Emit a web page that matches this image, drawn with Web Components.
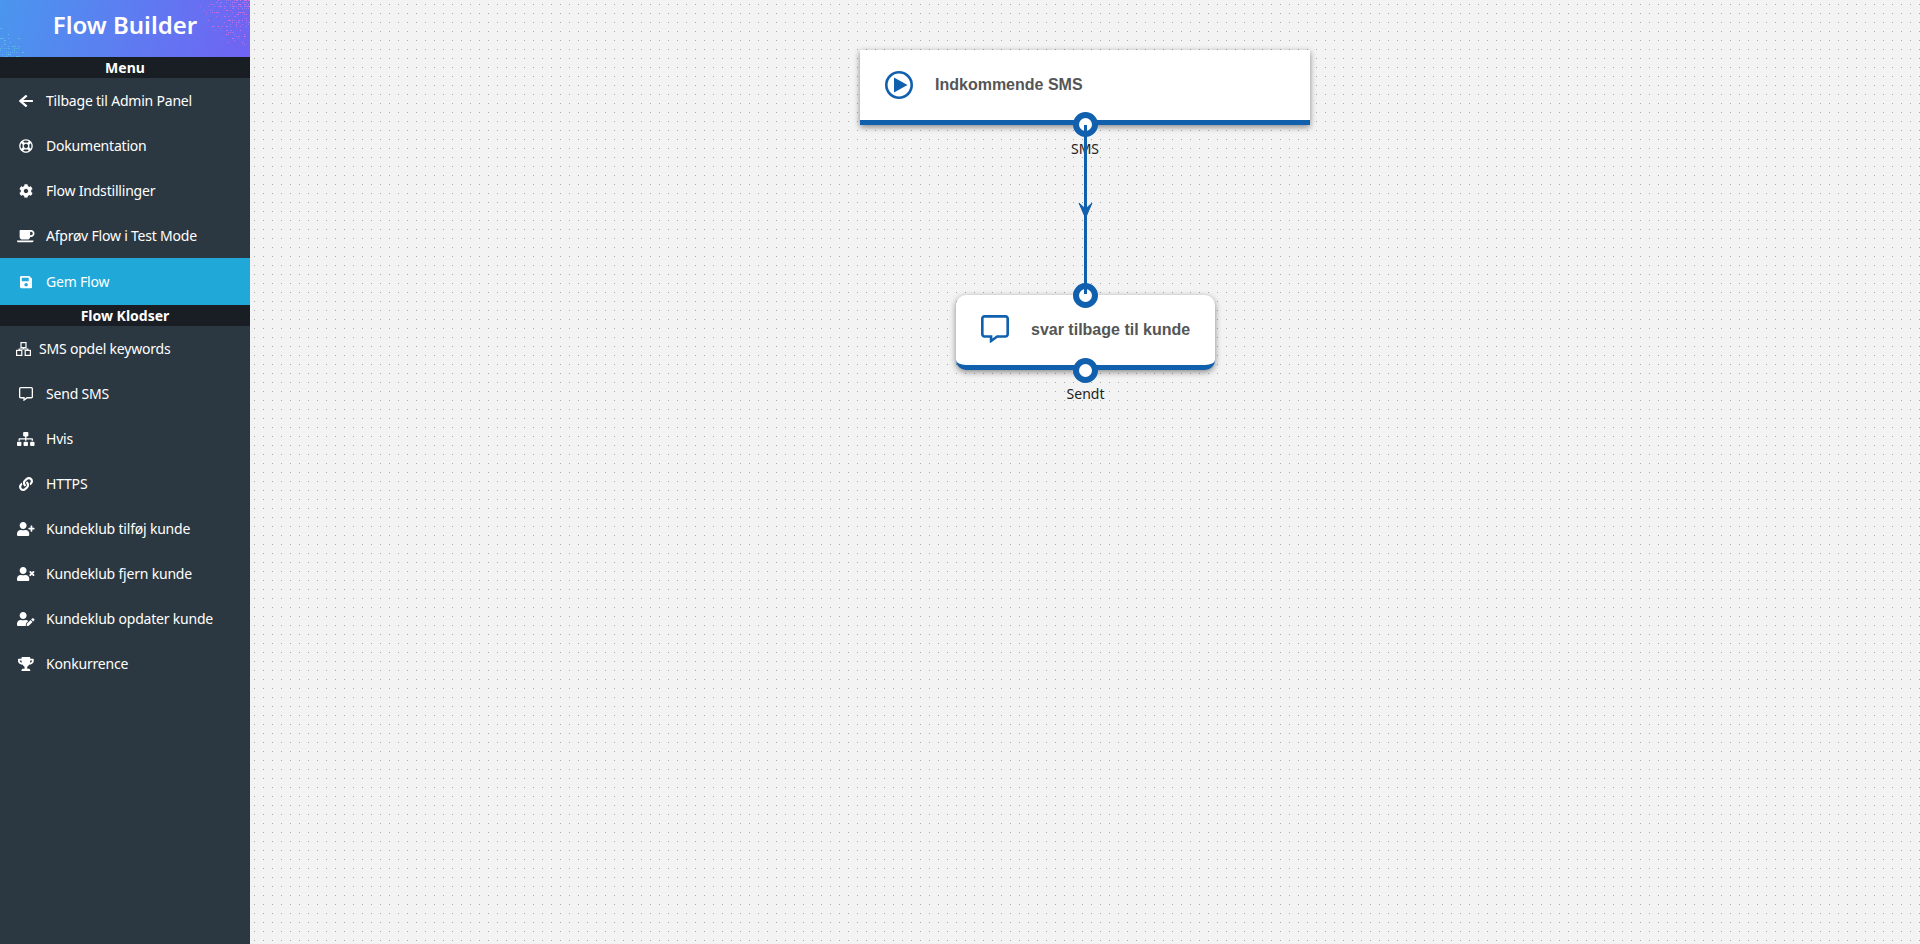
<!DOCTYPE html>
<html lang="da">
<head>
<meta charset="utf-8">
<title>Flow Builder</title>
<style>
    html, body { margin: 0; height: 100%; overflow: hidden; }
    body { font-family: "Noto Sans", "Open Sans", sans-serif; }
    flow-app { height: 100%; }
</style>
</head>
<body>
<flow-app>
    <flow-sidebar slot="sidebar">
        <side-head>Menu</side-head>
        <side-item icon="back">Tilbage til Admin Panel</side-item>
        <side-item icon="help">Dokumentation</side-item>
        <side-item icon="gear">Flow Indstillinger</side-item>
        <side-item icon="coffee">Afprøv Flow i Test Mode</side-item>
        <side-item icon="save" active>Gem Flow</side-item>
        <side-head>Flow Klodser</side-head>
        <side-item icon="boxes" tight>SMS opdel keywords</side-item>
        <side-item icon="chat">Send SMS</side-item>
        <side-item icon="tree">Hvis</side-item>
        <side-item icon="link">HTTPS</side-item>
        <side-item icon="useradd">Kundeklub tilføj kunde</side-item>
        <side-item icon="userdel">Kundeklub fjern kunde</side-item>
        <side-item icon="useredit">Kundeklub opdater kunde</side-item>
        <side-item icon="trophy">Konkurrence</side-item>
    </flow-sidebar>
    <flow-canvas slot="canvas">
        <flow-node kind="start" output="SMS" style="left:610px;top:50px;width:450px;height:75px">Indkommende SMS</flow-node>
        <flow-node kind="sms" input output="Sendt" style="left:706px;top:295px;width:259px;height:75px">svar tilbage til kunde</flow-node>
    </flow-canvas>
</flow-app>

<script>
const USER = 'M224 256c70.7 0 128-57.3 128-128S294.700 0 224 0 96 57.300 96 128s57.300 128 128 128zm89.600 32h-16.700c-22.200 10.200-46.900 16-72.900 16s-50.600-5.800-72.900-16h-16.700C60.200 288 0 348.200 0 422.400V464c0 26.500 21.500 48 48 48h352c26.500 0 48-21.500 48-48v-41.600c0-74.200-60.200-134.400-134.400-134.400z';
const CHAT = 'M448 0H64C28.700 0 0 28.700 0 64v288c0 35.300 28.700 64 64 64h96v84c0 7.100 5.800 12 12 12 2.400 0 4.900-.7 7.100-2.400L304 416h144c35.300 0 64-28.700 64-64V64c0-35.300-28.700-64-64-64zm16 352c0 8.800-7.200 16-16 16H288l-12.800 9.600L208 428v-60H64c-8.800 0-16-7.200-16-16V64c0-8.800 7.200-16 16-16h384c8.800 0 16 7.200 16 16v288z';

// [viewBox width, path] on a 512 high box
const ICONS = {
    back: [448, 'M257.500 445.100l-22.200 22.200c-9.400 9.400-24.600 9.400-33.900 0L7 273c-9.400-9.400-9.400-24.600 0-33.900L201.400 44.700c9.400-9.400 24.600-9.400 33.900 0l22.200 22.200c9.500 9.500 9.300 25-.4 34.300L136.600 216H424c13.300 0 24 10.700 24 24v32c0 13.300-10.700 24-24 24H136.600l120.500 114.800c9.800 9.300 10 24.800.4 34.300z'],
    help: [512, 'M256 504c136.967 0 248-111.033 248-248S392.967 8 256 8 8 119.033 8 256s111.033 248 248 248zm-103.398-76.720l53.411-53.411c31.806 13.506 68.128 13.522 99.974 0l53.411 53.411c-63.217 38.319-143.579 38.319-206.796 0zM336 256c0 44.112-35.888 80-80 80s-80-35.888-80-80 35.888-80 80-80 80 35.888 80 80zm91.280 103.398l-53.411-53.411c13.505-31.806 13.522-68.128 0-99.974l53.411-53.411c38.319 63.217 38.319 143.579 0 206.796zM359.397 84.720l-53.411 53.411c-31.806-13.505-68.128-13.522-99.973 0L152.602 84.720c63.217-38.319 143.579-38.319 206.795 0zM84.720 152.602l53.411 53.411c-13.506 31.806-13.522 68.128 0 99.974L84.720 359.398c-38.319-63.217-38.319-143.579 0-206.796z'],
    gear: [512, 'M487.400 315.700l-42.600-24.600c4.300-23.200 4.300-47 0-70.200l42.600-24.600c4.900-2.800 7.100-8.600 5.500-14-11.100-35.600-30-67.800-54.700-94.600-3.800-4.100-10-5.100-14.800-2.300L380.800 110c-17.900-15.400-38.500-27.300-60.800-35.100V25.800c0-5.600-3.900-10.500-9.400-11.700-36.700-8.200-74.300-7.800-109.200 0-5.500 1.200-9.400 6.100-9.400 11.700V75c-22.200 7.900-42.800 19.800-60.800 35.100L88.700 85.500c-4.900-2.800-11-1.900-14.800 2.300-24.700 26.700-43.600 58.900-54.700 94.600-1.700 5.400.6 11.200 5.500 14L67.300 221c-4.300 23.200-4.300 47 0 70.200l-42.600 24.600c-4.900 2.800-7.100 8.600-5.500 14 11.100 35.600 30 67.800 54.700 94.600 3.800 4.100 10 5.100 14.800 2.300l42.600-24.600c17.900 15.400 38.500 27.300 60.800 35.100v49.200c0 5.600 3.900 10.500 9.400 11.700 36.700 8.200 74.300 7.800 109.200 0 5.500-1.200 9.400-6.100 9.400-11.700v-49.200c22.200-7.900 42.800-19.800 60.800-35.100l42.600 24.600c4.900 2.800 11 1.900 14.800-2.300 24.700-26.700 43.600-58.900 54.700-94.600 1.500-5.500-.7-11.300-5.600-14.100zM256 336c-44.100 0-80-35.900-80-80s35.900-80 80-80 80 35.900 80 80-35.900 80-80 80z'],
    coffee: [640, 'M192 384h192c53 0 96-43 96-96h32c70.600 0 128-57.400 128-128S582.600 32 512 32H120c-13.300 0-24 10.700-24 24v232c0 53 43 96 96 96zM512 96c35.300 0 64 28.700 64 64s-28.700 64-64 64h-32V96h32zm47.700 384H48.300c-47.600 0-61-64-36-64h583.300c25 0 11.800 64-35.900 64z'],
    save: [448, 'M433.941 129.941l-83.882-83.882A48 48 0 0 0 316.118 32H48C21.490 32 0 53.490 0 80v352c0 26.510 21.490 48 48 48h352c26.510 0 48-21.490 48-48V163.882a48 48 0 0 0-14.059-33.941zM224 416c-35.346 0-64-28.654-64-64 0-35.346 28.654-64 64-64s64 28.654 64 64c0 35.346-28.654 64-64 64zm96-304.520V212c0 6.627-5.373 12-12 12H76c-6.627 0-12-5.373-12-12V108c0-6.627 5.373-12 12-12h228.520c3.183 0 6.235 1.264 8.485 3.515l3.480 3.480A11.996 11.996 0 0 1 320 111.480z'],
    chat: [512, CHAT],
    tree: [640, 'M128 352H32c-17.670 0-32 14.330-32 32v96c0 17.670 14.330 32 32 32h96c17.670 0 32-14.330 32-32v-96c0-17.670-14.330-32-32-32zm-24-80h192v48h48v-48h192v48h48v-57.590c0-21.170-17.230-38.410-38.410-38.410H344v-64h40c17.670 0 32-14.330 32-32V32c0-17.670-14.330-32-32-32H256c-17.670 0-32 14.330-32 32v96c0 17.670 14.330 32 32 32h40v64H94.410C73.230 224 56 241.230 56 262.410V320h48v-48zm264 80h-96c-17.670 0-32 14.330-32 32v96c0 17.670 14.330 32 32 32h96c17.670 0 32-14.330 32-32v-96c0-17.670-14.330-32-32-32zm240 0h-96c-17.670 0-32 14.330-32 32v96c0 17.670 14.330 32 32 32h96c17.670 0 32-14.330 32-32v-96c0-17.670-14.330-32-32-32z'],
    link: [512, 'M326.612 185.391c59.747 59.809 58.927 155.698.36 214.590-.11.120-.24.250-.36.370l-67.200 67.200c-59.270 59.270-155.699 59.262-214.960 0-59.270-59.260-59.270-155.700 0-214.960l37.106-37.106c9.840-9.840 26.786-3.300 27.294 10.606.648 17.722 3.826 35.527 9.690 52.721 1.986 5.822.567 12.262-3.783 16.612l-13.087 13.087c-28.026 28.026-28.905 73.660-1.155 101.960 28.024 28.579 74.086 28.749 102.325.51l67.200-67.190c28.191-28.191 28.073-73.757 0-101.830-3.701-3.694-7.429-6.564-10.341-8.569a16.037 16.037 0 0 1-6.947-12.606c-.396-10.567 3.348-21.456 11.698-29.806l21.054-21.055c5.521-5.521 14.182-6.199 20.584-1.731a152.482 152.482 0 0 1 20.522 17.197zM467.547 44.449c-59.261-59.262-155.690-59.270-214.960 0l-67.200 67.200c-.12.120-.25.250-.36.370-58.566 58.892-59.387 154.781.36 214.590a152.454 152.454 0 0 0 20.521 17.196c6.402 4.468 15.064 3.789 20.584-1.731l21.054-21.055c8.350-8.350 12.094-19.239 11.698-29.806a16.037 16.037 0 0 0-6.947-12.606c-2.912-2.005-6.640-4.875-10.341-8.569-28.073-28.073-28.191-73.639 0-101.830l67.200-67.190c28.239-28.239 74.300-28.069 102.325.51 27.750 28.300 26.872 73.934-1.155 101.960l-13.087 13.087c-4.350 4.350-5.769 10.790-3.783 16.612 5.864 17.194 9.042 34.999 9.690 52.721.509 13.906 17.454 20.446 27.294 10.606l37.106-37.106c59.271-59.259 59.271-155.699.001-214.959z'],
    useradd: [640, 'M624 208h-64v-64c0-8.800-7.200-16-16-16h-32c-8.800 0-16 7.200-16 16v64h-64c-8.800 0-16 7.200-16 16v32c0 8.800 7.200 16 16 16h64v64c0 8.800 7.200 16 16 16h32c8.800 0 16-7.200 16-16v-64h64c8.800 0 16-7.200 16-16v-32c0-8.800-7.200-16-16-16z' + USER],
    userdel: [640, 'M589.600 240l45.600-45.600c6.300-6.300 6.300-16.500 0-22.800l-22.800-22.800c-6.300-6.300-16.500-6.300-22.800 0L544 194.400l-45.600-45.600c-6.300-6.300-16.500-6.300-22.800 0l-22.800 22.800c-6.300 6.300-6.300 16.500 0 22.800l45.600 45.600-45.600 45.600c-6.300 6.300-6.300 16.500 0 22.800l22.800 22.800c6.300 6.300 16.500 6.300 22.800 0l45.600-45.600 45.600 45.600c6.300 6.300 16.500 6.300 22.800 0l22.800-22.800c6.300-6.300 6.300-16.500 0-22.800L589.600 240z' + USER],
    useredit: [640, 'M224 256c70.700 0 128-57.300 128-128S294.700 0 224 0 96 57.300 96 128s57.300 128 128 128zm89.600 32h-16.700c-22.200 10.200-46.900 16-72.900 16s-50.600-5.800-72.900-16h-16.700C60.200 288 0 348.200 0 422.400V464c0 26.500 21.500 48 48 48h274.900c-2.400-6.800-3.400-14-2.600-21.300l6.800-60.900 1.200-11.100 7.900-7.900 77.300-77.300c-24.500-27.700-60-45.500-99.900-45.500zm45.300 145.300l-6.800 61c-1.100 10.200 7.500 18.800 17.600 17.600l60.900-6.800 137.900-137.900-71.700-71.700-137.900 137.800zM633 268.900L595.100 231c-9.300-9.300-24.500-9.300-33.800 0l-37.800 37.800-4.100 4.100 71.800 71.700 41.800-41.800c9.300-9.400 9.300-24.500 0-33.900z'],
    trophy: [576, 'M552 64H448V24c0-13.300-10.700-24-24-24H152c-13.300 0-24 10.700-24 24v40H24C10.700 64 0 74.700 0 88v56c0 35.700 22.500 72.400 61.900 100.700 31.500 22.700 69.800 37.100 110 41.700C203.300 338.500 240 360 240 360v72h-48c-35.300 0-64 20.700-64 56v12c0 6.600 5.400 12 12 12h296c6.600 0 12-5.400 12-12v-12c0-35.300-28.700-56-64-56h-48v-72s36.700-21.500 68.100-73.600c40.300-4.600 78.700-19 110-41.700 39.300-28.300 61.900-65 61.900-100.700V88c0-13.300-10.700-24-24-24zM99.300 192.800C74.900 175.200 64 155.600 64 144v-16h64.200c1 32.600 5.800 61.200 12.800 86.200-15.100-5.200-29.200-12.400-41.700-21.400zM512 144c0 16.100-17.700 36.100-35.300 48.800-12.500 9-26.700 16.200-41.800 21.400 7-25 11.800-53.600 12.800-86.200H512v16z']
};

// speckles in the two corners of the header
function speckles(cx, cy, radius, colours) {
    let seed = 7, out = '';
    const rnd = () => (seed = seed * 16807 % 2147483647) / 2147483647;
    for (let y = 0; y < 57; y += 2) {
        for (let x = 0; x < 250; x += 2) {
            const d = Math.hypot(x - cx, y - cy);
            if (d > radius) continue;
            const hit = rnd() < (1 - d / radius) * 0.7;
            const c = colours[Math.floor(rnd() * colours.length)];
            if (hit) out += `<rect x="${x}" y="${y}" width="${rnd() < .3 ? 2 : 1}" height="1" fill="${c}"/>`;
        }
    }
    return out;
}

class FlowApp extends HTMLElement {
    constructor() {
        super();
        this.attachShadow({ mode: 'open' });
        this.shadowRoot.innerHTML = `
            <style>
                :host { display: grid; grid-template-columns: 250px 1fr; height: 100%; }
            </style>
            <slot name="sidebar"></slot>
            <slot name="canvas"></slot>
        `;
    }
}

class FlowSidebar extends HTMLElement {
    constructor() {
        super();
        this.attachShadow({ mode: 'open' });
        this.shadowRoot.innerHTML = `
            <style>
                :host { display: flex; flex-direction: column; background: #2c3841; height: 944px; overflow: hidden; }
                header {
                    position: relative;
                    height: 57px;
                    display: flex; align-items: center; justify-content: center;
                    color: #fff;
                    font-size: 24px; font-weight: 600;
                    padding-bottom: 8px; box-sizing: border-box;
                    background: linear-gradient(105deg, #4a96ee, #7063f3);
                }
                header span { position: relative; }
                svg { position: absolute; left: 0; top: 0; }
            </style>
            <header>
                <svg width="250" height="57">
                    ${speckles(246, 0, 50, ['#b56ae6', '#d06fdc', '#8a7cf5'])}
                    ${speckles(0, 57, 30, ['#4fb4e0', '#55c0dc', '#6ba8f0'])}
                </svg>
                <span>Flow Builder</span>
            </header>
            <slot></slot>
        `;
    }
}

class SideHead extends HTMLElement {
    constructor() {
        super();
        this.attachShadow({ mode: 'open' });
        this.shadowRoot.innerHTML = `
            <style>
                :host {
                    display: block; height: 21px; line-height: 21px;
                    background: #181e24; color: #fff;
                    font-size: 14px; font-weight: 700; text-align: center;
                }
            </style>
            <slot></slot>
        `;
    }
}

class SideItem extends HTMLElement {
    constructor() {
        super();
        this.attachShadow({ mode: 'open' });
        const name = this.getAttribute('icon');
        let svg;
        if (name === 'boxes') {
            // outlined block tree, not in the solid set
            svg = `<svg width="15" height="14" viewBox="0 0 15 14" fill="none" stroke="currentColor" stroke-width="1.2">
                <rect x="5" y=".6" width="5" height="5"/><rect x=".6" y="8.400" width="5.200" height="5"/><rect x="9.200" y="8.400" width="5.200" height="5"/>
                <path d="M7.500 5.600v1.400M3.200 8.400V7h8.600v1.400"/></svg>`;
        } else {
            const [w, d] = ICONS[name];
            // the back arrow is drawn a bit wider than its box in the original
            const width = name === 'back' ? 14 : 14 * w / 512;
            svg = `<svg width="${width}" height="14" viewBox="0 0 ${w} 512" preserveAspectRatio="none"><path fill="currentColor" d="${d}"/></svg>`;
        }
        this.shadowRoot.innerHTML = `
            <style>
                :host {
                    display: flex; align-items: center;
                    height: 45px; padding-left: 17px;
                    color: #fff; font-size: 14px; letter-spacing: -.2px;
                }
                :host([active]) { height: 47px; background: #20a8d8; }
                :host([tight]) { padding-left: 16px; }
                .ico { width: 18px; margin-right: 11px; display: flex; justify-content: center; flex: none; }
                :host([tight]) .ico { width: 15px; margin-right: 8px; }
            </style>
            <span class="ico">${svg}</span>
            <slot></slot>
        `;
    }
}

class FlowCanvas extends HTMLElement {
    constructor() {
        super();
        this.attachShadow({ mode: 'open' });
        this.shadowRoot.innerHTML = `
            <style>
                :host {
                    display: block; position: relative; height: 944px; overflow: hidden;
                    background-color: #f3f3f3;
                    background-image: radial-gradient(circle at 4.500px 4.500px, #a8a8a8 .6px, transparent 1px);
                    background-size: 9px 9px;
                }
                svg { position: absolute; left: 0; top: 0; width: 100%; height: 100%; pointer-events: none; z-index: 2; }
            </style>
            <slot></slot>
            <svg>
                <path d="M835.500 125V294" fill="none" stroke="#1160ae" stroke-width="3"/>
                <path d="M829 203 835.500 209 842 203 835.500 218Z" fill="#1160ae" stroke="#1160ae" stroke-linejoin="round"/>
            </svg>
        `;
    }
}

class FlowNode extends HTMLElement {
    constructor() {
        super();
        this.attachShadow({ mode: 'open' });
        const kind = this.getAttribute('kind');
        const output = this.getAttribute('output');
        const icon = kind === 'start'
            ? `<svg viewBox="0 0 28 28" width="28" height="28"><circle cx="14" cy="14" r="12.700" fill="none" stroke="#1160ae" stroke-width="2.600"/><path d="M9 6.500 22.500 14 9 21.500Z" fill="#1160ae"/></svg>`
            : `<svg viewBox="0 0 512 512" width="28" height="28" style="margin-top:-2px"><path fill="#1160ae" d="${CHAT}"/></svg>`;
        this.shadowRoot.innerHTML = `
            <style>
                :host {
                    position: absolute; box-sizing: border-box;
                    display: flex; align-items: center;
                    background: #fff; border-bottom: 5px solid #1160ae;
                    box-shadow: 0 2px 6px rgba(0,0,0,.45);
                    font: 700 16px "Liberation Sans", Arial, sans-serif; color: #555;
                    padding-left: 25px; gap: 22px;
                }
                :host([kind=sms]) { border-radius: 10px; }
                .pin {
                    position: absolute; left: 50%; margin-left: -12.500px;
                    width: 25px; height: 25px; box-sizing: border-box;
                    border: 6px solid #1160ae; border-radius: 50%; background: #fff;
                }
                .in { top: -12.500px; }
                .out { bottom: -17.500px; }
                :host([kind=start]) .out { bottom: -16.500px; }
                .label {
                    position: absolute; left: 0; right: 0; top: 100%; margin-top: 19px;
                    text-align: center; font: 400 14px/20px "Noto Sans", sans-serif; color: #222;
                }
            </style>
            ${icon}
            <slot></slot>
            ${this.hasAttribute('input') ? '<span class="pin in"></span>' : ''}
            <span class="pin out"></span>
            <span class="label">${output}</span>
        `;
    }
}

customElements.define('flow-app', FlowApp);
customElements.define('flow-sidebar', FlowSidebar);
customElements.define('side-head', SideHead);
customElements.define('side-item', SideItem);
customElements.define('flow-canvas', FlowCanvas);
customElements.define('flow-node', FlowNode);
</script>
</body>
</html>
